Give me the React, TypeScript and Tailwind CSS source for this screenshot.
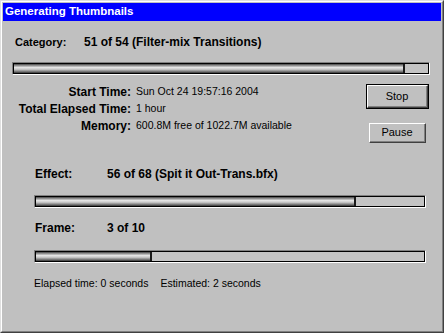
import React from "react";

const font = { fontFamily: '"Liberation Sans", Arial, sans-serif' };

function ProgressBar({ value, total, className }: { value: number; total: number; className?: string }) {
  const pct = (value / total) * 100;
  return (
    <div className={`h-[13px] border-t border-l border-[#808080] border-r border-b border-r-white border-b-white ${className ?? ""}`}>
      <div className="h-full border border-black bg-[#c4c4c4] flex">
        <div
          className="h-full bg-[linear-gradient(to_bottom,#454545_0%,#959595_18%,#e8e8e8_40%,#c0c0c0_62%,#737373_85%,#353535_100%)] border-r-2 border-[#1a1a1a]"
          style={{ width: `${pct}%` }}
        />
      </div>
    </div>
  );
}

function Win95Button({ label, isDefault, className }: { label: string; isDefault?: boolean; className?: string }) {
  const inner = (
    <div className="h-full border-t border-l border-white border-r border-b border-r-[#404040] border-b-[#404040]">
      <div className="h-full flex items-center justify-center border-r border-b border-[#808080] text-[11px] text-black">
        {label}
      </div>
    </div>
  );
  return isDefault ? (
    <div className={`border border-black ${className ?? ""}`}>{inner}</div>
  ) : (
    <div className={className}>{inner}</div>
  );
}

export default function App() {
  return (
    <div style={font} className="w-[444px] h-[333px] bg-[#c0c0c0] border-t border-l border-[#dfdfdf] border-r border-b border-r-[#404040] border-b-[#404040]">
      <div className="h-full flex flex-col border-t border-l border-white border-r border-b border-r-[#808080] border-b-[#808080] px-[1px] pt-[1px]">
        <div className="h-[18px] bg-[#0000ff] flex items-center pl-[2px] text-white font-bold text-[11.5px]">
          Generating Thumbnails
        </div>

        <div className="flex items-center h-[14px] mt-[14px] text-[11px] font-bold text-black">
          <span className="ml-[12px] w-[69px]">Category:</span>
          <span className="text-[12px]">51 of 54 (Filter-mix Transitions)</span>
        </div>

        <ProgressBar value={51} total={54} className="ml-[9px] w-[418px] mt-[13px]" />

        <div className="flex mt-[8px]">
          <div className="grid grid-cols-[128px_1fr] gap-x-[5px] text-[10.5px] text-black auto-rows-[17px] items-center">
            <span className="text-right font-bold text-[12px]">Start Time:</span>
            <span>Sun Oct 24 19:57:16 2004</span>
            <span className="text-right font-bold text-[12px]">Total Elapsed Time:</span>
            <span>1 hour</span>
            <span className="text-right font-bold text-[12px]">Memory:</span>
            <span>600.8M free of 1022.7M available</span>
          </div>
          <div className="ml-auto mr-[12px] flex flex-col items-center">
            <Win95Button label="Stop" isDefault className="w-[63px] h-[25px] mt-[1px]" />
            <Win95Button label="Pause" className="w-[57px] h-[20px] mt-[14px]" />
          </div>
        </div>

        <div className="flex items-center h-[14px] mt-[24px] text-[12px] font-bold text-black">
          <span className="ml-[32px] w-[72px]">Effect:</span>
          <span>56 of 68 (Spit it Out-Trans.bfx)</span>
        </div>

        <ProgressBar value={56} total={68} className="ml-[31px] w-[392px] mt-[14px]" />

        <div className="flex items-center h-[14px] mt-[13px] text-[12px] font-bold text-black">
          <span className="ml-[32px] w-[72px]">Frame:</span>
          <span>3 of 10</span>
        </div>

        <ProgressBar value={3} total={10} className="ml-[31px] w-[392px] mt-[15px]" />

        <div className="flex items-center h-[14px] mt-[14px] text-[10.5px] text-black">
          <span className="ml-[31px]">Elapsed time: 0 seconds</span>
          <span className="ml-[12px]">Estimated: 2 seconds</span>
        </div>
      </div>
    </div>
  );
}
